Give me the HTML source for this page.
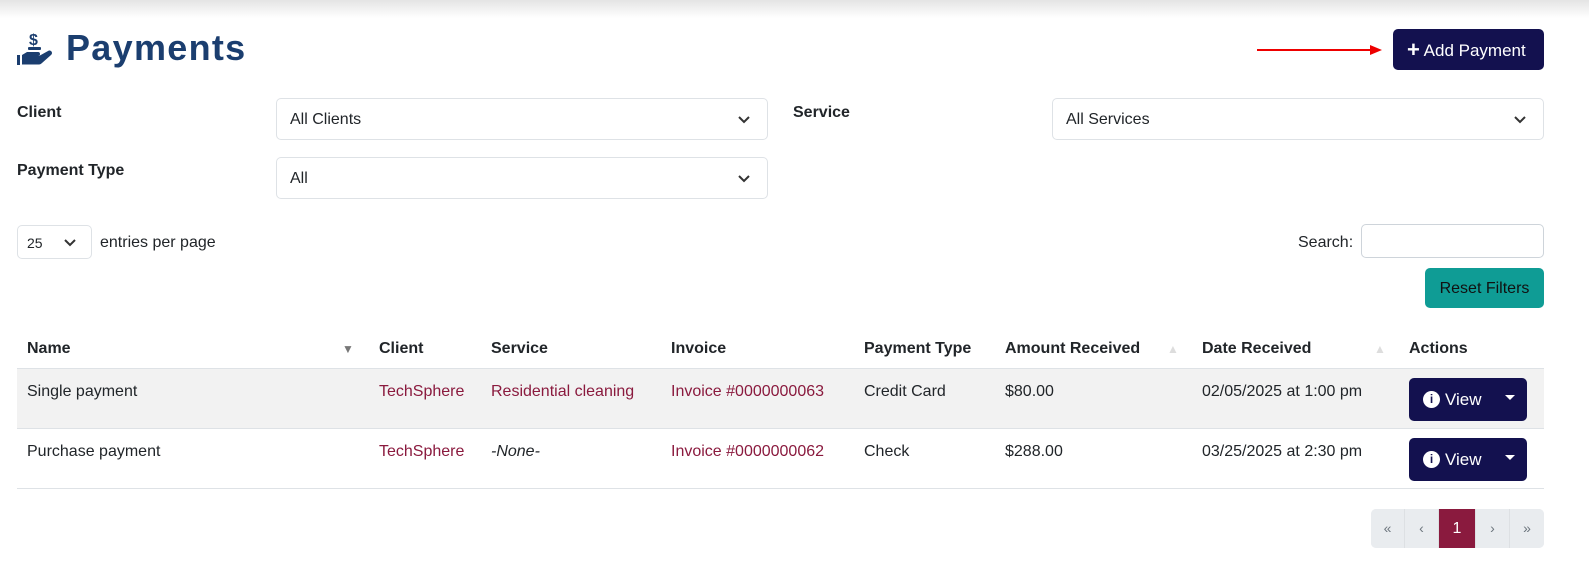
<!DOCTYPE html>
<html><head><style>
*{box-sizing:border-box}
body{margin:0;width:1589px;height:562px;overflow:hidden;background:#fff;font-family:"Liberation Sans",sans-serif;font-size:16px;color:#212529;position:relative}
.shadow{position:absolute;left:0;top:0;width:100%;height:18px;background:linear-gradient(#e4e4e4,#fff)}
.abs{position:absolute}
h1{position:absolute;left:66px;top:27px;margin:0;font-size:36px;font-weight:bold;color:#1b3e6f;letter-spacing:1.3px}
.btn{position:absolute;background:#13114f;color:#fff;border-radius:5px}
.lbl{position:absolute;font-weight:bold;font-size:16px}
.sel{position:absolute;border:1px solid #dee2e6;border-radius:5px;height:42px;padding:12px 13px;font-size:16px}
.sel svg{position:absolute;right:16px;top:16px}
.row{position:absolute;left:17px;width:1527px}
.c{position:absolute;top:0}
.link{color:#8a1a3e}
.view{position:absolute;left:1409px;width:118px;height:43px;background:#13114f;border-radius:5px;color:#fff;font-size:17px}
.pg{position:absolute;top:509px;height:39px;width:34px;background:#e9ecef;border-right:1px solid #dde0e3;color:#6c757d;text-align:center;line-height:39px;font-size:14px}
</style></head><body>
<div class="shadow"></div>
<svg class="abs" style="left:17px;top:31px" width="40" height="36" viewBox="0 0 40 36">
<text x="12" y="14" font-family="Liberation Sans" font-weight="bold" font-size="16" fill="#1b3e6f">$</text>
<rect x="11" y="16" width="13" height="3" rx="1" fill="#1b3e6f"/>
<path d="M0 24h3v10h-3z M5 24l5-3h11a2 2 0 0 1 0 4h-7h8l9-5a2.5 2.5 0 0 1 3 4l-9 8c-1 1-2 1.5-3 1.5h-17z" fill="#1b3e6f"/>
</svg>
<h1>Payments</h1>
<svg class="abs" style="left:1257px;top:42px" width="128" height="16"><line x1="0" y1="8" x2="115" y2="8" stroke="#e00" stroke-width="2"/><path d="M113 3l12 5-12 5z" fill="#e00"/></svg>
<div class="btn" style="left:1393px;top:29px;width:151px;height:41px;line-height:41px;font-size:17px;padding-left:14px"><b style="font-size:22px;vertical-align:-1px">+</b> Add Payment</div>

<div class="lbl" style="left:17px;top:104px">Client</div>
<div class="sel" style="left:276px;top:98px;width:492px">All Clients<svg width="14" height="10"><path d="M2 2l5 5 5-5" stroke="#333" stroke-width="2" fill="none"/></svg></div>
<div class="lbl" style="left:793px;top:104px">Service</div>
<div class="sel" style="left:1052px;top:98px;width:492px">All Services<svg width="14" height="10"><path d="M2 2l5 5 5-5" stroke="#333" stroke-width="2" fill="none"/></svg></div>
<div class="lbl" style="left:17px;top:162px">Payment Type</div>
<div class="sel" style="left:276px;top:157px;width:492px">All<svg width="14" height="10"><path d="M2 2l5 5 5-5" stroke="#333" stroke-width="2" fill="none"/></svg></div>

<div class="sel" style="left:17px;top:225px;width:75px;height:34px;padding:9px 9px;font-size:14px">25<svg style="right:14px;top:12px" width="14" height="10"><path d="M2 2l5 5 5-5" stroke="#333" stroke-width="2" fill="none"/></svg></div>
<div class="abs" style="left:100px;top:234px">entries per page</div>
<div class="abs" style="left:1298px;top:234px">Search:</div>
<div class="abs" style="left:1361px;top:224px;width:183px;height:34px;border:1px solid #ced4da;border-radius:5px"></div>
<div class="abs" style="left:1425px;top:268px;width:119px;height:40px;background:#0f9c95;border-radius:5px;text-align:center;line-height:42px;color:#111">Reset Filters</div>

<div class="row" style="top:330px;height:39px;border-bottom:1px solid #dee2e6;font-weight:bold;line-height:38px">
<span class="c" style="left:10px">Name</span><span class="c" style="left:325px;color:#777;font-size:12px">▼</span>
<span class="c" style="left:362px">Client</span><span class="c" style="left:474px">Service</span><span class="c" style="left:654px">Invoice</span><span class="c" style="left:847px">Payment Type</span><span class="c" style="left:988px">Amount Received</span><span class="c" style="left:1150px;color:#ddd;font-size:12px">▲</span><span class="c" style="left:1185px">Date Received</span><span class="c" style="left:1357px;color:#ddd;font-size:12px">▲</span><span class="c" style="left:1392px">Actions</span></div>
<div class="row" style="top:369px;height:60px;background:#f2f2f2;border-bottom:1px solid #dee2e6;line-height:46px">
<span class="c" style="left:10px">Single payment</span><span class="c link" style="left:362px">TechSphere</span><span class="c link" style="left:474px">Residential cleaning</span><span class="c link" style="left:654px">Invoice #0000000063</span><span class="c" style="left:847px">Credit Card</span><span class="c" style="left:988px">$80.00</span><span class="c" style="left:1185px">02/05/2025 at 1:00 pm</span></div>
<div class="row" style="top:429px;height:60px;border-bottom:1px solid #dee2e6;line-height:46px">
<span class="c" style="left:10px">Purchase payment</span><span class="c link" style="left:362px">TechSphere</span><span class="c" style="left:474px;font-style:italic">-None-</span><span class="c link" style="left:654px">Invoice #0000000062</span><span class="c" style="left:847px">Check</span><span class="c" style="left:988px">$288.00</span><span class="c" style="left:1185px">03/25/2025 at 2:30 pm</span></div>
<div class="view" style="top:378px"><span class="abs" style="left:14px;top:13px;width:17px;height:17px;border-radius:50%;background:#fff;color:#13114f;font-size:12px;font-weight:bold;text-align:center;line-height:17px">i</span><span class="abs" style="left:36px;top:12px">View</span><svg class="abs" style="left:96px;top:17px" width="10" height="6"><path d="M0 0h10l-5 5z" fill="#fff"/></svg></div>
<div class="view" style="top:438px"><span class="abs" style="left:14px;top:13px;width:17px;height:17px;border-radius:50%;background:#fff;color:#13114f;font-size:12px;font-weight:bold;text-align:center;line-height:17px">i</span><span class="abs" style="left:36px;top:12px">View</span><svg class="abs" style="left:96px;top:17px" width="10" height="6"><path d="M0 0h10l-5 5z" fill="#fff"/></svg></div>

<div class="abs" style="left:1371px;top:509px;width:173px;height:39px;border-radius:5px;background:#e9ecef"></div>
<div class="pg" style="left:1371px;border-radius:5px 0 0 5px">«</div>
<div class="pg" style="left:1405px">‹</div>
<div class="pg" style="left:1439px;width:37px;background:#8a1a3e;color:#fff;font-size:16px">1</div>
<div class="pg" style="left:1476px">›</div>
<div class="pg" style="left:1510px;border:none;border-radius:0 5px 5px 0">»</div>
</body></html>
